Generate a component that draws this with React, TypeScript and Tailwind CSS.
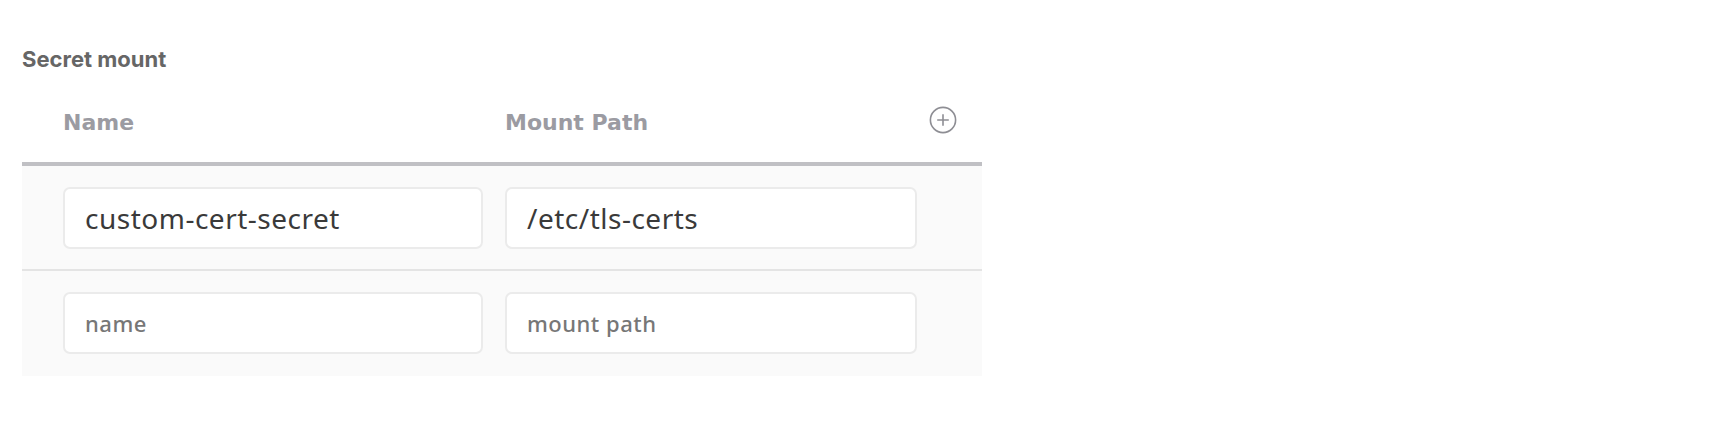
import React from "react";

function PlusCircle() {
  return (
    <svg width="28" height="28" viewBox="0 0 28 28" fill="none">
      <circle cx="14" cy="14" r="12.6" stroke="#8e8e94" strokeWidth="1.6" />
      <path d="M14 8.2V19.8M8.2 14H19.8" stroke="#8e8e94" strokeWidth="1.6" />
    </svg>
  );
}

function Field({ value, placeholder, w }: { value?: string; placeholder: string; w: string }) {
  return (
    <div
      className={`${w} h-[62px] shrink-0 rounded-[7px] border-2 border-[#ebebeb] bg-white flex items-center pl-[20px]`}
    >
      {value ? (
        <span className="text-[28px] tracking-[0.5px] text-[#3a3a3a] font-['Noto_Sans',sans-serif]">{value}</span>
      ) : (
        <span className="text-[22px] tracking-[0.5px] font-medium text-[#777777] font-['Noto_Sans',sans-serif]">
          {placeholder}
        </span>
      )}
    </div>
  );
}

export default function App() {
  return (
    <div className="w-[1730px] h-[428px] bg-white pt-[46px] pl-[22px]">
      <div className="text-[22px] font-bold text-[#666666] font-['Inter',sans-serif] leading-[26px]">
        Secret mount
      </div>
      <div className="w-[960px] mt-[24px]">
        <div className="flex items-center h-[70px] pb-[14px] pl-[41px] border-b-[4px] border-[#c0c0c4]">
          <div className="w-[442px] text-[22px] font-bold text-[#9b9ba2] font-['DejaVu_Sans',sans-serif]">Name</div>
          <div className="w-[412px] text-[22px] font-bold text-[#9b9ba2] font-['DejaVu_Sans',sans-serif]">
            Mount Path
          </div>
          <div className="pl-[12px] flex items-center mb-[5px]">
            <PlusCircle />
          </div>
        </div>
        <div className="bg-[#fafafa]">
          <div className="flex gap-[22px] pl-[41px] pt-[21px] pb-[20px] border-b-2 border-[#e4e4e4]">
            <Field value="custom-cert-secret" placeholder="name" w="w-[420px]" />
            <Field value="/etc/tls-certs" placeholder="mount path" w="w-[412px]" />
          </div>
          <div className="flex gap-[22px] pl-[41px] pt-[21px] pb-[22px]">
            <Field placeholder="name" w="w-[420px]" />
            <Field placeholder="mount path" w="w-[412px]" />
          </div>
        </div>
      </div>
    </div>
  );
}
